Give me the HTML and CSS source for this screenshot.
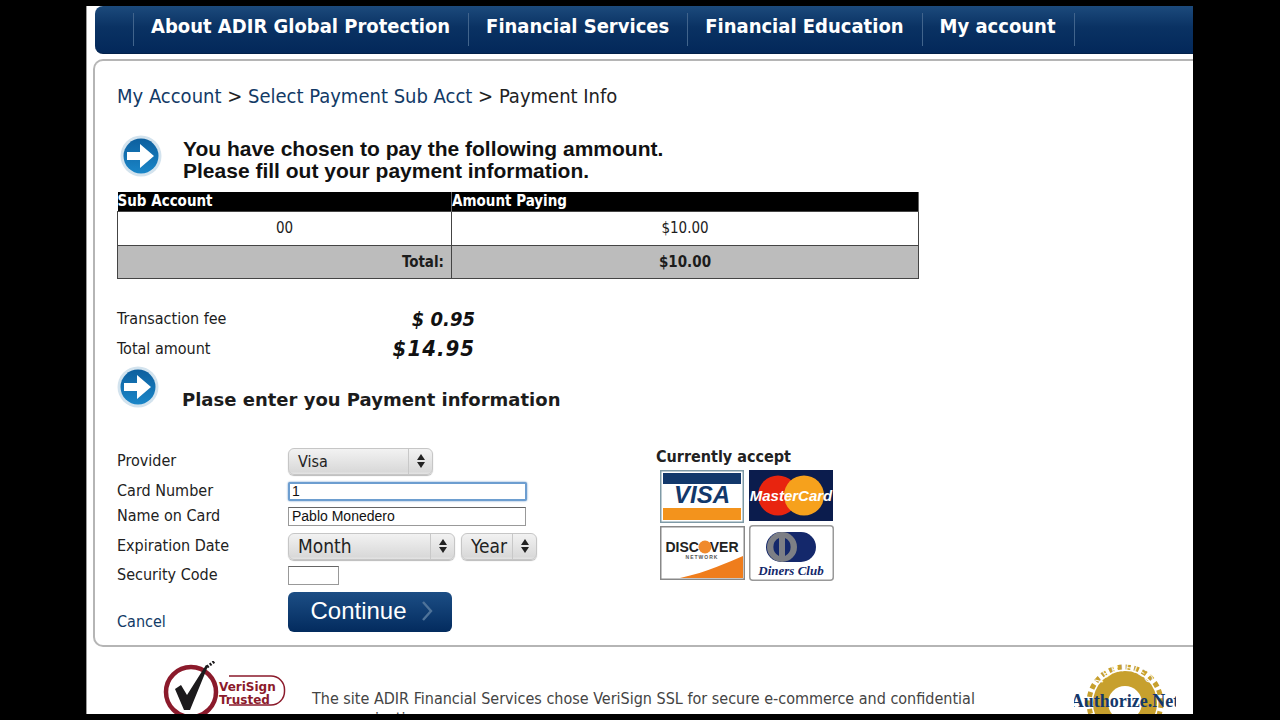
FILE: index.html
```html
<!DOCTYPE html>
<html lang="en">
<head>
<meta charset="utf-8">
<title>Payment Info</title>
<link rel="stylesheet" href="styles.css">
</head>
<body>
<div class="page">
  <nav class="nav">
    <a class="nav-item">About ADIR Global Protection</a>
    <a class="nav-item">Financial Services</a>
    <a class="nav-item">Financial Education</a>
    <a class="nav-item">My account</a>
  </nav>
  <main class="panel">
    <div class="crumbs"><span class="crumb-link">My Account</span> &gt; <span class="crumb-link">Select Payment Sub Acct</span> &gt; Payment Info</div>
    <div class="intro">
      <svg class="arrow-icon" viewBox="0 0 42 42"><defs><linearGradient id="g1" x1="0" y1="0" x2="0" y2="1"><stop offset="0" stop-color="#0d5f9e"/><stop offset="1" stop-color="#1a86c8"/></linearGradient></defs><circle cx="21" cy="21" r="20.5" fill="#d3e3ee"/><circle cx="21" cy="21" r="17.5" fill="url(#g1)"/><path d="M7 17h13V9l14 12-14 12v-8H7z" fill="#fff"/></svg>
      <h1 class="intro-text">You have chosen to pay the following ammount.<br>Please fill out your payment information.</h1>
    </div>
    <table class="pay-table">
      <thead><tr><th class="col-a">Sub Account</th><th>Amount Paying</th></tr></thead>
      <tbody>
        <tr class="row-value"><td>00</td><td>$10.00</td></tr>
        <tr class="row-total"><td class="total-label">Total:</td><td>$10.00</td></tr>
      </tbody>
    </table>
    <div class="summary">
      <div class="summary-row"><span class="summary-label">Transaction fee</span><span class="summary-value">$ 0.95</span></div>
      <div class="summary-row"><span class="summary-label">Total amount</span><span class="summary-value summary-total">$14.95</span></div>
    </div>
    <div class="enter">
      <svg class="arrow-icon" viewBox="0 0 42 42"><defs><linearGradient id="g2" x1="0" y1="0" x2="0" y2="1"><stop offset="0" stop-color="#0d5f9e"/><stop offset="1" stop-color="#1a86c8"/></linearGradient></defs><circle cx="21" cy="21" r="20.5" fill="#d3e3ee"/><circle cx="21" cy="21" r="17.5" fill="url(#g2)"/><path d="M7 17h13V9l14 12-14 12v-8H7z" fill="#fff"/></svg>
      <h2 class="enter-text">Plase enter you Payment information</h2>
    </div>
    <div class="pay-area">
      <form class="form">
        <div class="row row-sel gap7"><label class="lbl">Provider</label>
          <div class="sel sel-provider"><span class="sel-text sel-text-sm">Visa</span><span class="sel-caret"><i class="up"></i><i class="down"></i></span></div></div>
        <div class="row row-inp gap6"><label class="lbl">Card Number</label><div class="inp inp-focus">1</div></div>
        <div class="row row-inp gap7"><label class="lbl">Name on Card</label><div class="inp">Pablo Monedero</div></div>
        <div class="row row-sel gap6"><label class="lbl">Expiration Date</label>
          <div class="sel sel-month"><span class="sel-text">Month</span><span class="sel-caret"><i class="up"></i><i class="down"></i></span></div>
          <div class="sel sel-year"><span class="sel-text sel-text-year">Year</span><span class="sel-caret"><i class="up"></i><i class="down"></i></span></div></div>
        <div class="row row-inp gap7"><label class="lbl">Security Code</label><div class="inp inp-code"></div></div>
        <div class="row row-btn"><a class="lbl cancel">Cancel</a><button type="button" class="continue">Continue<svg class="chev" viewBox="0 0 12 20"><path d="M2 1l8 9-8 9" fill="none" stroke="#4f7399" stroke-width="2.4"/></svg></button></div>
      </form>
      <aside class="accept">
        <div class="accept-title">Currently accept</div>
        <div class="cards">
          <svg class="card" viewBox="0 0 84 53"><rect x=".75" y=".75" width="82.500" height="51.500" fill="#fff" stroke="#7f9aa6" stroke-width="1.500"/><rect x="3" y="3" width="78" height="11" fill="#12386b"/><rect x="3" y="38" width="78" height="12" fill="#f3931c"/><text x="42" y="33" class="visa-text" text-anchor="middle">VISA</text></svg>
          <svg class="card" viewBox="0 0 84 53"><rect width="84" height="51" fill="#0b1c4d"/><circle cx="29" cy="25.500" r="20" fill="#e8240f"/><circle cx="55" cy="25.500" r="20" fill="#f6a11c"/><text x="42" y="31" class="mc-text" text-anchor="middle">MasterCard</text></svg>
          <svg class="card" viewBox="0 0 85 54"><rect x=".75" y=".75" width="83.500" height="52.500" fill="#fff" stroke="#888" stroke-width="1.500"/><path d="M20 52C48 46 68 36 83 30v22z" fill="#ef7d1c"/><text x="42" y="26" class="disc-text" text-anchor="middle">DISCOVER</text><circle cx="45" cy="21" r="6.500" fill="#f08a2c"/><text x="42" y="33" class="disc-sub" text-anchor="middle">NETWORK</text></svg>
          <svg class="card card-diners" viewBox="0 0 85 56"><rect x=".75" y=".75" width="83.500" height="54.500" rx="3" fill="#fff" stroke="#999" stroke-width="1.500"/><rect x="17" y="7" width="50" height="30" rx="15" fill="#14286b"/><circle cx="33" cy="22" r="15" fill="#7d7f85"/><path d="M30 13a10 10 0 0 0 0 18zM36 13a10 10 0 0 1 0 18z" fill="#14286b"/><text x="42" y="50" class="diners-text" text-anchor="middle">Diners Club</text></svg>
        </div>
      </aside>
    </div>
  </main>
  <footer class="foot">
    <svg class="verisign" viewBox="0 0 126 56"><path d="M68 15h42a13.500 13.500 0 0 1 13.500 13.500v2A13.500 13.500 0 0 1 110 44H68" fill="none" stroke="#8b1a2b" stroke-width="1.500"/><circle cx="30" cy="31" r="25" fill="#fff" stroke="#8b1a2b" stroke-width="4.500"/><path d="M14 28l6-4 6 10L45 4l2 1-18 44h-6z" fill="#1c1a1c"/><path d="M46 6l8-6" stroke="#1c1a1c" stroke-width="3" stroke-dasharray="2 1.500"/><text x="58" y="30" class="vs-text">VeriSign</text><text x="58" y="43" class="vs-text">Trusted</text></svg>
    <p class="foot-text">The site ADIR Financial Services chose VeriSign SSL for secure e-commerce and confidential communications.</p>
    <svg class="seal" viewBox="0 0 102 60"><circle cx="51" cy="41" r="36" fill="#fff"/><circle cx="51" cy="41" r="36" fill="none" stroke="#c7a02d" stroke-width="5" stroke-dasharray="5 3.500"/><circle cx="51" cy="41" r="32" fill="#c7a02d"/><circle cx="51" cy="41" r="17" fill="#fff"/><path id="sealArc" d="M23 37a28 28 0 0 1 56 0" fill="none"/><text class="seal-arc"><textPath href="#sealArc" startOffset="50%" text-anchor="middle">VERIFIED</textPath></text><text x="51" y="45" class="seal-name" text-anchor="middle">Authorize.Net</text></svg>
  </footer>
</div>
</body>
</html>
```
FILE: styles.css
```css
* { box-sizing: border-box; }
html, body { margin: 0; height: 720px; background: #000; overflow: hidden; }
body { font-family: "DejaVu Sans", sans-serif; font-stretch: condensed; color: #1c1c1c; }
.page { margin: 6px 0 0 86px; width: 1107px; height: 708px; background: #fff; overflow: hidden; border-left: 1px solid #999; }

.nav { margin-left: 8px; height: 48px; display: flex; align-items: center; padding-left: 38px; border-radius: 8px 0 0 8px;
  background: linear-gradient(#1c4a7c 0%, #0a3263 45%, #03285a 100%); border-bottom: 1px solid #02214a; }
.nav-item { height: 33px; margin-top: -1px; padding: 0 18px 0 17px; border-right: 1px solid #41648c; color: #fff; font-weight: bold; font-size: 20px; line-height: 26px; white-space: nowrap; }
.nav-item:first-child { border-left: 1px solid #41648c; }

.panel { margin: 5px 0 0 6px; height: 588px; border: 2px solid #b5b5b5; border-right: 0; border-radius: 10px 0 0 10px; padding: 23px 0 0 22px; }
.crumbs { font-size: 20px; line-height: 24px; height: 24px; color: #222; white-space: nowrap; }
.crumb-link { color: #123a66; }

.intro { display: flex; margin-top: 27px; height: 57px; padding-left: 3px; }
.arrow-icon { width: 42px; height: 42px; flex: none; }
.intro-text { margin: 3px 0 0 21px; font: bold 21px/22px "Liberation Sans", sans-serif; color: #111; white-space: nowrap; }

.pay-table { width: 802px; height: 86px; border-collapse: collapse; table-layout: fixed; font-size: 15px; }
.pay-table .col-a { width: 334px; }
.pay-table th { height: 19px; background: #000; color: #fff; text-align: left; padding: 0; font-size: 15px; line-height: 17px; border-right: 1px solid #666; }
.pay-table td { text-align: center; border: 1px solid #444; padding: 0; }
.row-value td { height: 34px; }
.row-total td { height: 33px; background: #bcbcbc; font-weight: bold; }
.pay-table .total-label { text-align: right; padding-right: 7px; }

.summary { margin-top: 25px; }
.summary-row { display: flex; align-items: center; height: 30px; width: 358px; justify-content: space-between; font-size: 16px; }
.summary-value { font-weight: bold; font-style: italic; font-size: 20px; color: #111; }
.summary-total { font-size: 22px; letter-spacing: 1px; }

.enter { display: flex; height: 82px; margin-top: 2px; }
.enter .arrow-icon { margin-left: 0; }
.enter-text { margin: 22px 0 0 23px; font-size: 18px; line-height: 24px; font-weight: bold; color: #1c1c1c; white-space: nowrap; font-stretch: normal; }

.pay-area { display: flex; }
.form { width: 539px; flex: none; }
.row { display: flex; align-items: center; }
.row-sel { height: 27px; }
.row-inp { height: 19px; }
.row-btn { height: 40px; align-items: flex-end; }
.gap7 { margin-bottom: 7px; }
.gap6 { margin-bottom: 6px; }
.lbl { width: 171px; flex: none; font-size: 16px; line-height: 20px; color: #222; }
.cancel { color: #123a66; }

.sel { height: 27px; display: flex; justify-content: space-between; border: 1px solid #c6c6c6; border-radius: 6px; background: linear-gradient(#f2f2f2, #d9d9d9 90%, #e4e4e4); box-shadow: 0 1px 1px #bbb; }
.sel-provider { width: 145px; }
.sel-month { width: 167px; }
.sel-year { width: 76px; margin-left: 6px; }
.sel-text { padding-left: 9px; font-size: 19px; line-height: 24px; color: #222; }
.sel-text-sm { font-size: 16px; line-height: 25px; }
.sel-text-year { padding-left: 9px; }
.sel-caret { width: 24px; flex: none; border-left: 1px solid #c8c8c8; display: flex; flex-direction: column; align-items: center; justify-content: center; gap: 2px; }
.sel-caret i { display: block; width: 0; height: 0; border-left: 4px solid transparent; border-right: 4px solid transparent; }
.sel-caret .up { border-bottom: 6px solid #222; }
.sel-caret .down { border-top: 6px solid #222; }

.inp { width: 238px; height: 19px; border: 1px solid #999; border-top-color: #666; font: 14px/17px "Liberation Sans", sans-serif; padding-left: 3px; color: #111; background: #fff; }
.inp-focus { width: 239px; border: 2px solid #6d9ed0; box-shadow: 0 0 2px #5b8fc4; border-radius: 2px; padding-left: 2px; line-height: 15px; }
.inp-code { width: 51px; }

.continue { width: 164px; height: 40px; padding: 0 0 2px 3px; border: 0; border-radius: 6px; display: flex; align-items: center; justify-content: center; gap: 14px;
  background: linear-gradient(#1c4e85, #032b5e); color: #fff; font: 24px "Liberation Sans", sans-serif; }
.chev { width: 12px; height: 20px; }

.accept { padding-top: 0; }
.accept-title { font-size: 16px; font-weight: bold; font-stretch: condensed; line-height: 18px; height: 22px; color: #222; white-space: nowrap; }
.cards { display: grid; grid-template-columns: 84px 85px; column-gap: 5px; row-gap: 3px; margin-left: 4px; }
.card { display: block; width: 84px; height: 53px; }
.card:nth-child(3) { width: 85px; height: 54px; }
.card-diners { width: 85px; height: 56px; margin-top: -1px; }
.visa-text { font: italic bold 24px "Liberation Sans", sans-serif; fill: #12386b; }
.mc-text { font: italic bold 15px "Liberation Sans", sans-serif; fill: #fff; }
.disc-text { font: bold 14px "Liberation Sans", sans-serif; fill: #222; }
.disc-sub { font: bold 5px "Liberation Sans", sans-serif; fill: #555; letter-spacing: 1px; }
.diners-text { font: italic bold 13px "Liberation Serif", serif; fill: #14286b; }

.foot { position: relative; display: flex; align-items: flex-start; height: 60px; margin-top: 12px; padding-left: 74px; }
.verisign { width: 126px; height: 56px; flex: none; margin-top: 2px; }
.vs-text { font: bold 12px "DejaVu Sans", sans-serif; fill: #8b1a2b; }
.foot-text { margin: 30px 0 0 25px; width: 700px; font-size: 16px; line-height: 20px; color: #444; }
.seal { width: 102px; height: 60px; flex: none; margin: 3px 0 0 62px; }
.seal-arc { font: 11px "Liberation Sans", sans-serif; fill: #fff; letter-spacing: 1px; }
.seal-name { font: bold 18px "Liberation Serif", serif; fill: #14386b; }
```
